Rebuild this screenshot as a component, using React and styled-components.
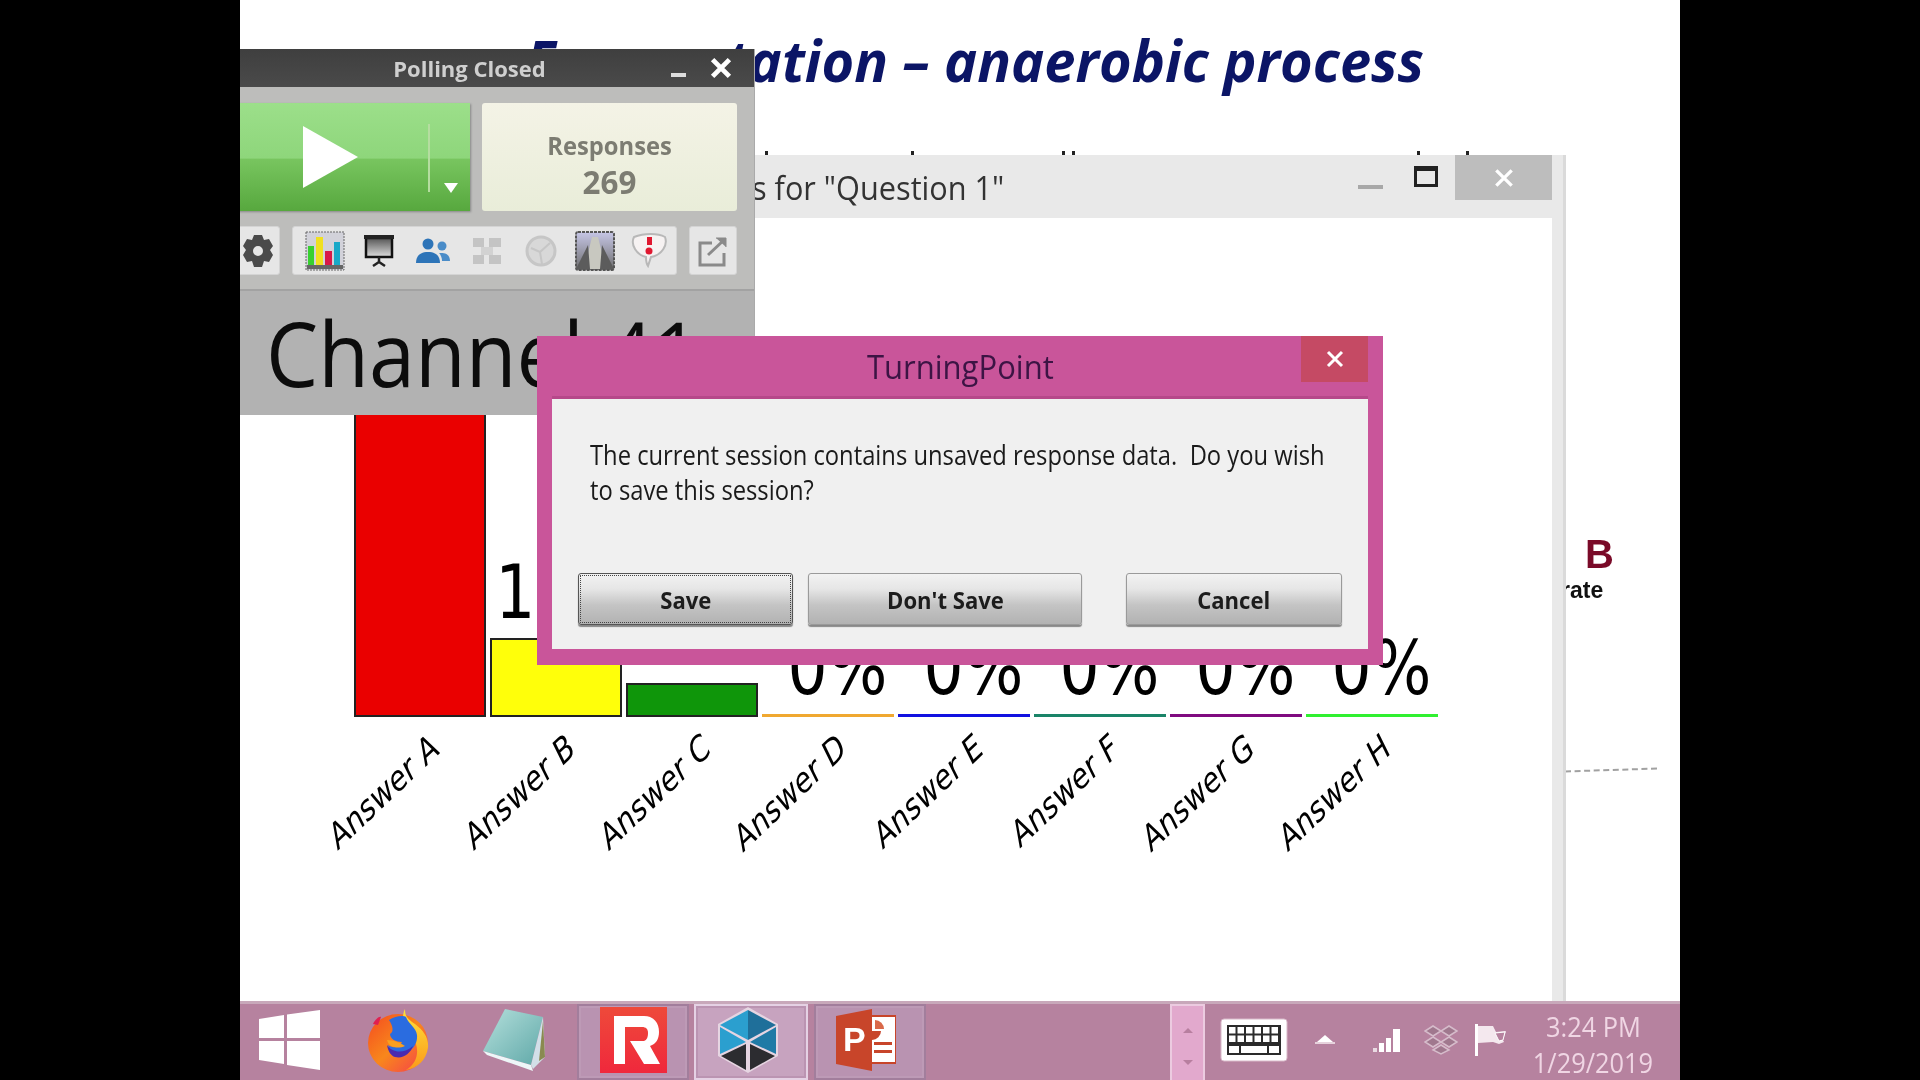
import React from 'react';
import styled, { createGlobalStyle } from 'styled-components';

const Global = createGlobalStyle`
  html, body { margin: 0; padding: 0; background: #000; }
  * { box-sizing: border-box; }
  #root { width: 1920px; height: 1080px; overflow: hidden; }
`;
const Stage = styled.div`width: 1920px; height: 1080px; display: flex; justify-content: center; background: #000;`;
const Screen = styled.div`width: 1440px; height: 1080px; display: flex; flex-direction: column; overflow: hidden; filter: blur(0.6px); font-family: "Open Sans", sans-serif;`;
const Desktop = styled.div`flex: 1; position: relative; background: #fff; overflow: hidden;`;
const Squeezed = styled.span`
  display: inline-block; white-space: pre;
  transform: scaleX(${p => p.$x ?? 0.8});
  transform-origin: ${p => p.$o ?? 'center'} center;
`;
const SlideTitle = styled.h1`
  position: absolute; right: 256px; top: 22px; margin: 0; white-space: nowrap;
  font: italic 700 58px/76px "Open Sans", sans-serif; color: #0b1566;
`;
const SlideMark = styled.i`position: absolute; top: 151px; left: ${p => p.$x}px; width: 3px; height: 4px; background: #222;`;
const SideLetter = styled.b`position: absolute; left: 1345px; top: 531px; font: 700 40px/46px "Liberation Sans", sans-serif; color: #7a0a28;`;
const SideWord = styled.b`position: absolute; left: 1321px; top: 577px; font: 700 23px/26px "Liberation Sans", sans-serif; color: #111;`;
const SideDash = styled.i`position: absolute; left: 1325px; top: 769px; width: 92px; border-top: 2px dashed #8a8a8a; transform: rotate(-1.8deg); opacity: .8;`;

const QuestionWindow = styled.section`
  position: absolute; left: 0; top: 155px; width: 1326px; bottom: 0;
  display: flex; flex-direction: column; background: #e9e9e9; border-right: 3px solid #dadada;
`;
const QuestionBar = styled.header`height: 63px; display: flex; align-items: flex-start; flex-shrink: 0; position: relative;`;
const QuestionTitle = styled.div`position: absolute; right: 559px; top: 11px; font-size: 33px; line-height: 44px; color: #333;`;
const WinCtl = styled.div`margin-left: auto; display: flex; align-items: flex-start; padding-right: 11px;`;
const WinMin = styled.i`width: 25px; height: 4px; background: #a8a8a8; margin: 30px 31px 0 0;`;
const WinMax = styled.i`width: 24px; height: 21px; border: 3px solid #222; border-top-width: 5px; margin: 11px 17px 0 0;`;
const WinClose = styled.div`width: 97px; height: 45px; background: #bdbdbd; color: #fff; display: flex; align-items: center; justify-content: center;`;
const QuestionBody = styled.div`flex: 1; margin-right: 11px; background: #fff; padding-left: 114px;`;
const Chart = styled.div`height: 499px; display: flex; align-items: flex-end; gap: 4px;`;
const Column = styled.div`width: 132px; display: flex; flex-direction: column; align-items: center;`;
const Value = styled.div`font: 75px/75px "DejaVu Sans", sans-serif; color: #000; margin: 0 0 8px 18px; white-space: nowrap;`;
const Bar = styled.div`
  width: 100%; height: ${p => p.$h}px; background: ${p => p.$c};
  border: ${p => p.$h > 4 ? '2px solid #222' : 'none'};
`;
const Labels = styled.div`display: flex; gap: 4px; margin-top: 3px;`;
const LabelCell = styled.div`width: 132px; height: 46px; display: flex; justify-content: flex-end; padding-right: 51px;`;
const LabelText = styled.span`
  flex-shrink: 0; white-space: nowrap; font: 37px/46px "DejaVu Sans", sans-serif; color: #000;
  transform-origin: 100% 50%; transform: scaleX(.72) rotate(-34.5deg);
`;

const Polling = styled.section`
  position: absolute; left: -55px; top: 49px; width: 570px; height: 366px;
  display: flex; flex-direction: column; background: #bdbdbb; border-right: 1px solid #aaa;
`;
const PollBar = styled.header`
  height: 38px; flex-shrink: 0; display: grid; grid-template-columns: 1fr auto 1fr; align-items: center;
  background: linear-gradient(#3f3f3f, #4a4a4a); color: #cfcfcf; font-weight: 700; font-size: 22px;
`;
const PollCtl = styled.div`justify-self: end; display: flex; align-items: center; gap: 23px; padding-right: 21px;`;
const PollMin = styled.i`width: 15px; height: 4px; background: #ddd; margin-top: 14px;`;
const PollRow = styled.div`display: flex; justify-content: flex-end; gap: 12px; padding-right: 17px;`;
const Play = styled.div`
  width: 285px; height: 108px; margin-top: 16px; position: relative; display: flex; align-items: center;
  background: linear-gradient(#9cdf8a 0, #8ed67b 51%, #78c55f 52%, #57a83e 100%); box-shadow: 1px 1px 2px #888;
`;
const PlayDiv = styled.i`position: absolute; right: 40px; top: 21px; width: 2px; height: 68px; background: #b5dda0;`;
const Caret = styled.i`position: absolute; right: 12px; top: 80px; border: 7px solid transparent; border-top: 10px solid #fff; border-bottom: 0;`;
const Responses = styled.div`
  width: 255px; height: 108px; margin-top: 16px; display: flex; flex-direction: column; align-items: center; justify-content: center; padding-top: 13px;
  background: linear-gradient(#f4f3e6, #e9edd9); border-radius: 3px; color: #7c7c72; font-weight: 700;
`;
const RespLabel = styled.div`font-size: 25px; line-height: 36px;`;
const RespValue = styled.div`font-size: 32px; line-height: 38px;`;
const ToolBtn = styled.div`
  width: ${p => p.$w}px; height: 49px; margin-top: 15px; display: flex; align-items: center; justify-content: ${p => p.$j ?? 'center'};
  background: #e6e6e6; border: 1px solid #d4d4d4; border-radius: 3px;
`;
const ToolGroup = styled(ToolBtn)`justify-content: flex-start; padding-left: 5px;`;
const ToolSlot = styled.div`width: ${p => p.$w ?? 55}px; display: flex; justify-content: center; align-items: center;`;
const ChannelArea = styled.div`
  margin-top: 14px; border-top: 2px solid #a2a2a2; flex: 1; background: #b2b2b2; padding-left: 81px; color: #0c0c0c;
  font-size: 90px; line-height: 122px;
`;

const Dialog = styled.section`
  position: absolute; left: 297px; top: 336px; width: 846px; height: 329px; display: flex; flex-direction: column;
  background: #c9559a; padding: 0 15px 16px 15px;
`;
const DialogHead = styled.header`height: 63px; display: flex; align-items: center; justify-content: center; flex-shrink: 0; color: #3c1444; font-size: 32px; border-bottom: 3px solid #b6488a;`;
const DialogClose = styled.div`position: absolute; top: 0; right: 15px; width: 67px; height: 46px; background: #c54a64; color: #fff; display: flex; align-items: center; justify-content: center;`;
const DialogBody = styled.div`flex: 1; background: #f0f0f0; display: flex; flex-direction: column; padding: 38px 26px 24px;`;
const Message = styled.div`font-size: 27px; line-height: 35px; color: #1a1a1a; padding-left: 12px;`;
const MessageLine = styled.div`height: 35px;`;
const Actions = styled.div`margin-top: auto; display: flex; gap: 15px;`;
const Btn = styled.div`
  width: ${p => p.$w}px; height: 52px; margin-left: ${p => p.$ml ?? 0}px; display: flex; align-items: center; justify-content: center;
  border: 1px solid ${p => p.$focus ? '#555' : '#9a9a9a'}; border-radius: 3px; font-weight: 700; font-size: 24px; color: #1c1c1c;
  background: linear-gradient(#f2f2f2 0, #e6e6e6 30%, #c4c4c4 62%, #b2b2b2 100%);
  outline: ${p => p.$focus ? '1px dotted #444' : 'none'}; outline-offset: -3px;
  box-shadow: 0 2px 1px #888;
`;

const Taskbar = styled.footer`
  height: 79px; flex-shrink: 0; display: flex; align-items: stretch; position: relative;
  background: #b6829f; border-top: 3px solid #c8a8ba;
`;
const Slot = styled.div`
  width: ${p => p.$w}px; margin-left: ${p => p.$ml ?? 0}px; padding-bottom: 5px; padding-right: ${p => p.$pr ?? 0}px;
  display: flex; align-items: center; justify-content: center;
`;
const Task = styled(Slot)`
  background: ${p => p.$active ? '#c7a3bf' : '#b993b1'};
  border: 2px solid ${p => p.$active ? '#e5d1e4' : '#a27e9c'};
  box-shadow: inset 0 0 0 2px ${p => p.$active ? '#bb94b2' : '#bd9ab6'};
`;
const ScrollStrip = styled.div`
  width: 35px; margin-left: 1px; background: #e2a9cd; border: 2px solid #eccbe0; border-bottom: none;
  display: flex; flex-direction: column; align-items: center; justify-content: space-around; padding: 8px 0 2px;
`;
const ArrowUp = styled.i`border: 5px solid transparent; border-bottom: 5px solid #b77f9f; border-top: 0;`;
const ArrowDown = styled.i`border: 5px solid transparent; border-top: 5px solid #b77f9f; border-bottom: 0;`;
const Clock = styled.div`margin-left: auto; padding: 5px 23px 0 0; display: flex; flex-direction: column; align-items: center; color: #f0d6e4; font-size: 27px; line-height: 36px;`;
const ClockLine = styled.div``;

const gear = (
  <svg width="34" height="34" viewBox="0 0 34 34"><path fill="#4a4a4a" fillRule="evenodd" d="M13 1h8l2 5 5-1 4 7-3 4 3 5-4 7-5-1-2 6h-8l-2-6-5 1-4-7 3-5-3-4 4-7 5 1zM17 12a5 5 0 1 0 0 10a5 5 0 0 0 0-10z"/></svg>
);
const chartIcon = (
  <svg width="40" height="40" viewBox="0 0 40 40">
    <rect x="1" y="1" width="38" height="38" fill="#d2d2da" stroke="#666" strokeDasharray="2 1"/>
    <rect x="3" y="15" width="6" height="19" fill="#38d030"/><rect x="11" y="6" width="7" height="28" fill="#f0e020"/>
    <rect x="20" y="20" width="7" height="14" fill="#d81848"/><rect x="29" y="11" width="6" height="23" fill="#18a8c8"/>
    <rect x="2" y="34" width="36" height="4" fill="#666"/>
  </svg>
);
const projector = (
  <svg width="30" height="34" viewBox="0 0 30 34">
    <defs><linearGradient id="sc" x1="0" y1="0" x2="0" y2="1"><stop offset="0" stopColor="#555"/><stop offset="1" stopColor="#ddd"/></linearGradient></defs>
    <rect x="2" y="4" width="26" height="19" fill="url(#sc)" stroke="#111" strokeWidth="2.5"/><rect x="0" y="1" width="30" height="4" fill="#222"/>
    <path d="M15 23v6M9 32l6-4 6 4" stroke="#222" strokeWidth="2.5" fill="none"/>
  </svg>
);
const people = (
  <svg width="34" height="26" viewBox="0 0 34 26" fill="#2d74b8">
    <circle cx="12" cy="6" r="5.5"/><path d="M0 25c0-8 5-11 12-11s12 3 12 11z"/><circle cx="26" cy="8" r="4.5" fill="#4a8cc8"/><path d="M25 15c5 0 9 2 9 8h-8c0-3-1-6-3-8z" fill="#4a8cc8"/>
  </svg>
);
const network = (
  <svg width="28" height="26" viewBox="0 0 28 26" fill="#c4c4c4">
    <rect x="0" y="0" width="11" height="9"/><rect x="16" y="0" width="12" height="9"/><rect x="8" y="9" width="12" height="8" fill="#d2d2d2"/><rect x="0" y="17" width="11" height="9"/><rect x="16" y="17" width="12" height="9"/>
  </svg>
);
const globe = (
  <svg width="32" height="32" viewBox="0 0 32 32"><circle cx="16" cy="16" r="14" fill="#d8d8d8" stroke="#c6c6c6" strokeWidth="3"/><path d="M6 13l9 4 10-9M15 17l2 12" stroke="#c6c6c6" strokeWidth="2" fill="none"/></svg>
);
const road = (
  <svg width="40" height="40" viewBox="0 0 40 40">
    <defs><linearGradient id="rd" x1="0" y1="0" x2="0" y2="1"><stop offset="0" stopColor="#c6c6e6"/><stop offset="1" stopColor="#6e6e6e"/></linearGradient></defs>
    <rect x="1" y="1" width="38" height="38" rx="2" fill="url(#rd)" stroke="#555" strokeWidth="2" strokeDasharray="3 1"/>
    <path d="M17 6h6l8 32H9z" fill="#c8c8c0"/><path d="M1 38l12-24 2 24zM39 38L27 14l-2 24z" fill="#5c5c5c"/>
  </svg>
);
const bubble = (
  <svg width="38" height="36" viewBox="0 0 38 36">
    <path d="M4 4c10-4 24-4 31 0c3 8-3 18-14 20l-3 9c-2-3-2-6-2-9C7 22 0 12 4 4z" fill="#f6f2f2" stroke="#b8b8b8" strokeWidth="2"/>
    <rect x="17" y="4" width="5" height="8" fill="#e01830"/><circle cx="19" cy="18" r="3.5" fill="#e01830"/>
  </svg>
);
const exportIcon = (
  <svg width="30" height="32" viewBox="0 0 30 32" fill="none" stroke="#8a8a8a" strokeWidth="3">
    <path d="M14 8H2v22h24V18"/><path d="M10 20L26 5"/><path d="M18 3h10v9" fill="#8a8a8a" strokeWidth="1"/>
  </svg>
);
const winLogo = (
  <svg width="62" height="60" viewBox="0 0 62 60" fill="#fff">
    <path d="M1 9l25-4v23H1zM29 4.500l33-4.500v28H29zM1 31h25v23L1 50zM29 31h33v29l-33-5z"/>
  </svg>
);
const firefox = (
  <svg width="62" height="64" viewBox="0 0 62 64">
    <defs>
      <linearGradient id="ffa" x1="0" y1="0" x2="1" y2="1"><stop offset="0" stopColor="#f44a20"/><stop offset=".5" stopColor="#f8871c"/><stop offset="1" stopColor="#f53a50"/></linearGradient>
      <linearGradient id="ffb" x1="0" y1="0" x2="0" y2="1"><stop offset="0" stopColor="#ffe23a"/><stop offset="1" stopColor="#fb9a1a"/></linearGradient>
    </defs>
    <ellipse cx="31" cy="35" rx="30" ry="29" fill="url(#ffa)"/>
    <path d="M38 1c0 8 3 10 10 15c9 7 14 14 13 24c-2 12-10 20-22 22c10-6 13-16 10-26c-3-9-13-14-13-24c0-4 0-8 2-11z" fill="url(#ffb)"/>
    <path d="M22 12c6-4 14-5 17-3c3 8 10 10 11 18c1 10-7 19-17 19c-6 0-11-3-12-9c5 4 12 2 14-3c-6 0-12-3-12-8c4-2 3-8-1-14z" fill="#2a6ce0"/>
    <path d="M20 37c5 8 17 9 26 1c-3 8-10 13-18 11c-4-1-7-6-8-12z" fill="#4a2ab0"/>
    <path d="M20 32c6 0 14 3 18 6c-7 3-16 2-18-6z" fill="#f8a020"/>
    <path d="M6 16c2-4 6-8 8-7l-3 8z" fill="#e02050"/>
  </svg>
);
const notepad = (
  <svg width="62" height="62" viewBox="0 0 62 62">
    <defs><linearGradient id="np" x1="0" y1="0" x2="1" y2="1"><stop offset="0" stopColor="#b5e0dc"/><stop offset="1" stopColor="#5fa8a8"/></linearGradient></defs>
    <path d="M22 0l38 8l-12 48L0 42z" fill="url(#np)"/><path d="M60 8l2 40l-12 12l-2-4z" fill="#d2dfe8"/><path d="M0 42l48 14l2 6l-46-16z" fill="#eef6f8"/><path d="M60 12l2 36l-6 4z" fill="#8a8a50"/>
  </svg>
);
const rLogo = (
  <svg width="67" height="66" viewBox="0 0 67 66">
    <defs><linearGradient id="rl" x1="0" y1="0" x2="0" y2="1"><stop offset="0" stopColor="#ee4a3a"/><stop offset="1" stopColor="#f0283c"/></linearGradient></defs>
    <rect width="67" height="66" fill="url(#rl)"/>
    <path fillRule="evenodd" fill="#fff" d="M14 9h30c10 0 15 7 15 16c0 7-3 12-9 14l10 18H44L30 34h14c3-1 4-4 4-8s-2-6-6-6H25v37H14z"/>
  </svg>
);
const hexLogo = (
  <svg width="66" height="66" viewBox="0 0 66 66">
    <path d="M33 0L63 17V49L33 66L3 49V17z" fill="#fff" opacity=".55"/>
    <path d="M33 3L33 33L5 18z" fill="#2b9fcf"/><path d="M33 3L61 18L33 33z" fill="#1f6f9a"/>
    <path d="M5 20L31 35L5 47z" fill="#2b9fcf"/><path d="M61 20L35 35L61 47z" fill="#1f7aa6"/>
    <path d="M31 37V63L6 49z" fill="#2c2c30"/><path d="M35 37V63L60 49z" fill="#2c2c30"/>
  </svg>
);
const ppt = (
  <svg width="60" height="62" viewBox="0 0 60 62">
    <rect x="26" y="7" width="34" height="47" fill="#fff" stroke="#c8452a" strokeWidth="2"/>
    <path d="M36 13a9 9 0 1 0 9 9h-9z" fill="#c8452a"/><path d="M39 11a9 9 0 0 1 9 9h-9z" fill="#d9694a"/>
    <rect x="38" y="33" width="18" height="3" fill="#c8452a"/><rect x="38" y="41" width="18" height="3" fill="#c8452a"/>
    <path d="M0 7L36 0v62L0 55z" fill="#c8452a"/>
    <text x="7" y="42" fontFamily="Liberation Sans, sans-serif" fontWeight="700" fontSize="34" fill="#fff">P</text>
  </svg>
);
const keyboard = (
  <svg width="68" height="44" viewBox="0 0 68 44">
    <rect x="1" y="1" width="66" height="42" rx="3" fill="#fff" stroke="#d8b8c8"/>
    <rect x="7" y="7" width="54" height="30" fill="#2a2a2a"/>
    {[0,1,2,3,4,5].flatMap(i => [0,1].map(j => <rect key={`${i}${j}`} x={9 + i*8.500} y={9 + j*8.500} width="6.500" height="6.500" fill="#fff"/>))}
    <rect x="9" y="28" width="10" height="7" fill="#fff"/><rect x="21" y="28" width="26" height="7" fill="#fff"/><rect x="49" y="28" width="10" height="7" fill="#fff"/>
  </svg>
);
const trayCaret = <svg width="24" height="10" viewBox="0 0 24 10"><path d="M12 0l8 7H4z" fill="#fff"/><rect x="2" y="7" width="20" height="2" fill="#e6d2dc"/></svg>;
const signal = (
  <svg width="30" height="26" viewBox="0 0 30 26" fill="#fff"><rect x="0" y="21" width="4" height="4" opacity=".7"/><rect x="6" y="16" width="5" height="9"/><rect x="13" y="11" width="5" height="14"/><rect x="20" y="2" width="7" height="23"/></svg>
);
const dropbox = (
  <svg width="34" height="30" viewBox="0 0 34 30" fill="#a0788e" stroke="#d6bccb" strokeWidth="1.500">
    <path d="M9 1l8 5-8 5-8-5zM25 1l8 5-8 5-8-5zM9 12l8 5-8 5-8-5zM25 12l8 5-8 5-8-5zM17 20l8 5-8 4-8-4z"/>
  </svg>
);
const flag = (
  <svg width="32" height="32" viewBox="0 0 32 32">
    <rect x="0" y="0" width="3" height="32" fill="#fff"/><path d="M3 2h15l3 6 10-1-3 9 1 2-5 2-6-2-15 1z" fill="#f4e8ee"/><path d="M20 9l10-1-2 8-4 1z" fill="#b6829f" stroke="#fff"/>
  </svg>
);
const closeX = (size, w) => (
  <svg width={size} height={size} viewBox="0 0 20 20"><path d="M3 3l14 14M17 3L3 17" stroke="#fff" strokeWidth={w} fill="none"/></svg>
);

const bars = [
  { id: 'A', h: 325, c: '#ea0000', v: '74%' },
  { id: 'B', h: 79, c: '#ffff0a', v: '18%' },
  { id: 'C', h: 34, c: '#0f960a', v: '8%' },
  { id: 'D', h: 3, c: '#f0a830', v: '0%' },
  { id: 'E', h: 3, c: '#1212e0', v: '0%' },
  { id: 'F', h: 3, c: '#1a8468', v: '0%' },
  { id: 'G', h: 3, c: '#800a80', v: '0%' },
  { id: 'H', h: 3, c: '#30f030', v: '0%' },
];
const marks = [525, 671, 822, 832, 1177, 1226];
const tools = [chartIcon, projector, people, network, globe, road, bubble];

export default function App() {
  return (
    <Stage>
      <Global />
      <Screen>
        <Desktop>
          <SlideTitle><Squeezed $x={0.965} $o="right">Fermentation – anaerobic process</Squeezed></SlideTitle>
          {marks.map(x => <SlideMark key={x} $x={x} />)}
          <SideLetter>B</SideLetter>
          <SideWord>rate</SideWord>
          <SideDash />
          <QuestionWindow>
            <QuestionBar>
              <QuestionTitle><Squeezed $x={0.93} $o="right">Results for "Question 1"</Squeezed></QuestionTitle>
              <WinCtl>
                <WinMin /><WinMax />
                <WinClose>{closeX(22, 3)}</WinClose>
              </WinCtl>
            </QuestionBar>
            <QuestionBody>
              <Chart>
                {bars.map(b => (
                  <Column key={b.id}>
                    <Value><Squeezed $x={0.84}>{b.v}</Squeezed></Value>
                    <Bar $h={b.h} $c={b.c} />
                  </Column>
                ))}
              </Chart>
              <Labels>
                {bars.map(b => (
                  <LabelCell key={b.id}><LabelText>Answer {b.id}</LabelText></LabelCell>
                ))}
              </Labels>
            </QuestionBody>
          </QuestionWindow>
          <Polling>
            <PollBar>
              <span />
              <Squeezed $x={1}>Polling Closed</Squeezed>
              <PollCtl><PollMin />{closeX(24, 4)}</PollCtl>
            </PollBar>
            <PollRow>
              <Play>
                <svg width="55" height="62" viewBox="0 0 55 62" style={{ marginLeft: 118 }}><path d="M0 0L55 31L0 62z" fill="#fff" /></svg>
                <PlayDiv /><Caret />
              </Play>
              <Responses>
                <RespLabel><Squeezed $x={0.95}>Responses</Squeezed></RespLabel>
                <RespValue><Squeezed $x={0.98}>269</Squeezed></RespValue>
              </Responses>
            </PollRow>
            <PollRow>
              <ToolBtn $w={97} $j="flex-end"><ToolSlot $w={43}>{gear}</ToolSlot></ToolBtn>
              <ToolGroup $w={385}>
                {tools.map((t, i) => <ToolSlot key={i}>{t}</ToolSlot>)}
              </ToolGroup>
              <ToolBtn $w={49}>{exportIcon}</ToolBtn>
            </PollRow>
            <ChannelArea><Squeezed $x={0.92} $o="left">Channel 41</Squeezed></ChannelArea>
          </Polling>
          <Dialog>
            <DialogHead><Squeezed $x={0.97}>TurningPoint</Squeezed></DialogHead>
            <DialogClose>{closeX(20, 3)}</DialogClose>
            <DialogBody>
              <Message>
                <MessageLine><Squeezed $x={0.88} $o="left">The current session contains unsaved response data.  Do you wish</Squeezed></MessageLine>
                <MessageLine><Squeezed $x={0.88} $o="left">to save this session?</Squeezed></MessageLine>
              </Message>
              <Actions>
                <Btn $w={215} $focus><Squeezed $x={0.92}>Save</Squeezed></Btn>
                <Btn $w={274}><Squeezed $x={0.92}>Don't Save</Squeezed></Btn>
                <Btn $w={216} $ml={29}><Squeezed $x={0.92}>Cancel</Squeezed></Btn>
              </Actions>
            </DialogBody>
          </Dialog>
        </Desktop>
        <Taskbar>
          <Slot $w={97}>{winLogo}</Slot>
          <Slot $w={121}>{firefox}</Slot>
          <Slot $w={112}>{notepad}</Slot>
          <Task $w={112} $ml={7}>{rLogo}</Task>
          <Task $w={114} $ml={5} $pr={7} $active>{hexLogo}</Task>
          <Task $w={112} $ml={6} $pr={8}>{ppt}</Task>
          <Slot $w={243} />
          <ScrollStrip><ArrowUp /><ArrowDown /></ScrollStrip>
          <Slot $w={68} $ml={15}>{keyboard}</Slot>
          <Slot $w={24} $ml={25}>{trayCaret}</Slot>
          <Slot $w={30} $ml={36}>{signal}</Slot>
          <Slot $w={34} $ml={21}>{dropbox}</Slot>
          <Slot $w={32} $ml={17}>{flag}</Slot>
          <Clock>
            <ClockLine><Squeezed $x={0.94}>3:24 PM</Squeezed></ClockLine>
            <ClockLine><Squeezed $x={0.94}>1/29/2019</Squeezed></ClockLine>
          </Clock>
        </Taskbar>
      </Screen>
    </Stage>
  );
}
